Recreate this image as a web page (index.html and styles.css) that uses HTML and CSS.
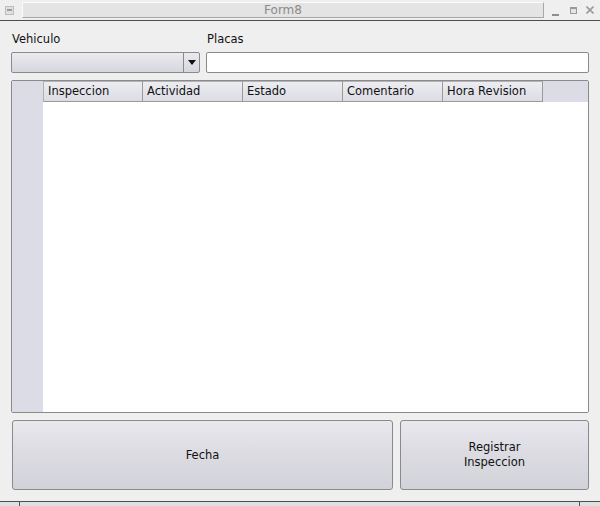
FILE: index.html
```html
<!DOCTYPE html>
<html>
<head>
<meta charset="utf-8">
<link rel="stylesheet" href="styles.css">
</head>
<body>
<div class="window">
  <div class="titlebar">
    <div class="wicon"><span></span></div>
    <div class="wtitle">Form8</div>
    <div class="wbtns">
      <span class="wmin"></span>
      <span class="wmax"></span>
      <svg class="wclose" width="8" height="8" viewBox="0 0 8 8"><path d="M0.5 0.5L7.5 7.5M7.5 0.5L0.5 7.5" stroke="#9a9a9a" stroke-width="1.6"/></svg>
    </div>
  </div>
  <div class="content">
    <div class="fields">
      <div class="field combo-field">
        <div class="label">Vehiculo</div>
        <div class="combo">
          <div class="combo-val"></div>
          <div class="combo-arrow"><svg width="8" height="5" viewBox="0 0 8 5"><path d="M0 0H8L4 5Z" fill="#111"/></svg></div>
        </div>
      </div>
      <div class="field text-field">
        <div class="label">Placas</div>
        <div class="input"></div>
      </div>
    </div>
    <div class="table">
      <div class="thead">
        <div class="corner"></div>
        <div class="th th-first">Inspeccion</div>
        <div class="th">Actividad</div>
        <div class="th">Estado</div>
        <div class="th">Comentario</div>
        <div class="th">Hora Revision</div>
        <div class="th-fill"></div>
      </div>
      <div class="tbody">
        <div class="rowhead"></div>
        <div class="cells"></div>
      </div>
    </div>
    <div class="buttons">
      <div class="btn btn-fecha">Fecha</div>
      <div class="btn btn-reg">Registrar<br>Inspeccion</div>
    </div>
  </div>
  <div class="bottomframe">
    <div class="bf-a"></div>
    <div class="bf-b"></div>
    <div class="bf-c"></div>
  </div>
</div>
</body>
</html>
```
FILE: styles.css
```css
* { box-sizing: border-box; }
html, body { margin: 0; padding: 0; }
body {
  width: 600px;
  height: 506px;
  background: #efefef;
  font-family: "DejaVu Sans", sans-serif;
  font-size: 11.5px;
  color: #111;
  overflow: hidden;
}
.window {
  display: flex;
  flex-direction: column;
  height: 506px;
}
.titlebar {
  height: 21px;
  display: flex;
  align-items: center;
  border-bottom: 1px solid #4e4e4e;
  background: #efefef;
  flex: none;
}
.wicon {
  width: 9px;
  height: 9px;
  margin-left: 5px;
  background: #e0e0e0;
  border: 1px solid #bdbdbd;
  display: flex;
  align-items: center;
  justify-content: center;
}
.wicon span {
  width: 5px;
  height: 2px;
  background: #9c9c9c;
}
.wtitle {
  margin-left: 8px;
  width: 522px;
  height: 16px;
  background: #e4e4e4;
  border: 1px solid;
  border-color: #fbfbfb #a8a8a8 #a8a8a8 #fbfbfb;
  color: #8a8a8a;
  font-size: 12px;
  line-height: 14px;
  text-align: center;
}
.wbtns {
  display: flex;
  align-items: center;
  margin-left: 8px;
  height: 16px;
}
.wmin {
  width: 7px;
  height: 2px;
  background: #8e8e8e;
  margin-top: 9px;
}
.wmax {
  width: 7px;
  height: 7px;
  border: 1px solid #9a9a9a;
  border-top-width: 2px;
  background: #e4e4e4;
  margin-left: 11px;
}
.wclose {
  margin-left: 9px;
}
.content {
  flex: 1;
  display: flex;
  flex-direction: column;
  padding: 11px 11px 0 11px;
}
.fields {
  display: flex;
  gap: 6px;
}
.field {
  display: flex;
  flex-direction: column;
}
.combo-field { width: 189px; }
.text-field { flex: 1; }
.label {
  height: 15px;
  line-height: 15px;
  padding-left: 1px;
  margin-bottom: 5px;
}
.combo {
  height: 21px;
  border: 1px solid #8a8a8a;
  border-radius: 2px;
  background: linear-gradient(#eaeaf0, #d6d6de);
  display: flex;
}
.combo-val { flex: 1; }
.combo-arrow {
  width: 16px;
  border-left: 1px solid #8a8a8a;
  display: flex;
  align-items: center;
  justify-content: center;
}
.input {
  height: 21px;
  background: #fff;
  border: 1px solid #8a8a8a;
  border-radius: 2px;
}
.table {
  margin-top: 7px;
  height: 333px;
  border: 1px solid #8a8a8a;
  border-radius: 2px;
  background: #fff;
  display: flex;
  flex-direction: column;
  overflow: hidden;
}
.thead {
  height: 21px;
  display: flex;
  background: #dcdce6;
  flex: none;
}
.corner { width: 31px; }
.th {
  width: 100px;
  border-top: 1px solid #b4b4b4;
  border-bottom: 1px solid #9a9a9a;
  border-right: 1px solid #9a9a9a;
  background: linear-gradient(#ececf2, #dcdce4);
  padding-left: 4px;
  line-height: 18px;
}
.th-first {
  border-left: 1px solid #b0b0b0;
}
.th-fill { flex: 1; }
.tbody {
  flex: 1;
  display: flex;
}
.rowhead {
  width: 31px;
  background: #dcdce6;
}
.cells { flex: 1; background: #fff; }
.buttons {
  margin-top: 7px;
  display: flex;
  gap: 7px;
  padding-left: 1px;
}
.btn {
  height: 70px;
  border: 1px solid #8a8a8a;
  border-radius: 3px;
  background: linear-gradient(#e8e8ee 0%, #dcdce2 45%, #d2d2da 100%);
  display: flex;
  align-items: center;
  justify-content: center;
  text-align: center;
  line-height: 15px;
}
.btn-fecha { width: 381px; }
.btn-reg { flex: 1; }
.bottomframe {
  height: 5px;
  border-top: 1px solid #4e4e4e;
  display: flex;
  background: #e0e0e0;
  flex: none;
}
.bf-a { width: 20px; border-right: 1px solid #555; }
.bf-b { flex: 1; border-right: 1px solid #555; }
.bf-c { width: 20px; }
```
